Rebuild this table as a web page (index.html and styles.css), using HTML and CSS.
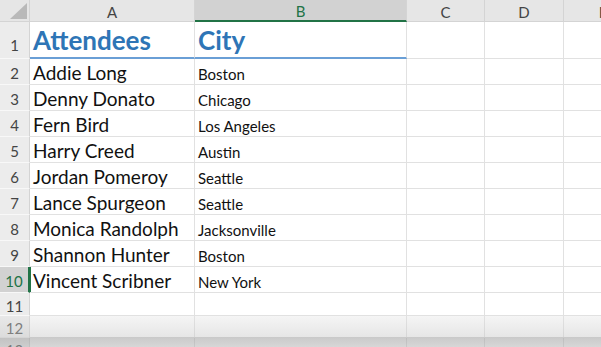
FILE: index.html
```html
<!DOCTYPE html>
<html>
<head>
<meta charset="utf-8">
<link rel="stylesheet" href="styles.css">
</head>
<body>
<div class="sheet">
  <div class="grid">
    <div class="corner"><svg width="29" height="22" viewBox="0 0 29 22"><polygon points="10,19 27,19 27,3" fill="#b9b9b9"/></svg></div>
    <div class="colhead">A</div>
    <div class="colhead sel">B</div>
    <div class="colhead">C</div>
    <div class="colhead">D</div>
    <div class="colhead edge">E</div>

    <div class="rowhead r1">1</div>
    <div class="cell title">Attendees</div>
    <div class="cell title">City</div>
    <div class="cell"></div><div class="cell"></div><div class="cell"></div>

    <div class="rowhead">2</div><div class="cell name">Addie Long</div><div class="cell city">Boston</div><div class="cell"></div><div class="cell"></div><div class="cell"></div>
    <div class="rowhead">3</div><div class="cell name">Denny Donato</div><div class="cell city">Chicago</div><div class="cell"></div><div class="cell"></div><div class="cell"></div>
    <div class="rowhead">4</div><div class="cell name">Fern Bird</div><div class="cell city">Los Angeles</div><div class="cell"></div><div class="cell"></div><div class="cell"></div>
    <div class="rowhead">5</div><div class="cell name">Harry Creed</div><div class="cell city">Austin</div><div class="cell"></div><div class="cell"></div><div class="cell"></div>
    <div class="rowhead">6</div><div class="cell name">Jordan Pomeroy</div><div class="cell city">Seattle</div><div class="cell"></div><div class="cell"></div><div class="cell"></div>
    <div class="rowhead">7</div><div class="cell name">Lance Spurgeon</div><div class="cell city">Seattle</div><div class="cell"></div><div class="cell"></div><div class="cell"></div>
    <div class="rowhead">8</div><div class="cell name">Monica Randolph</div><div class="cell city">Jacksonville</div><div class="cell"></div><div class="cell"></div><div class="cell"></div>
    <div class="rowhead">9</div><div class="cell name">Shannon Hunter</div><div class="cell city">Boston</div><div class="cell"></div><div class="cell"></div><div class="cell"></div>
    <div class="rowhead sel">10</div><div class="cell name active">Vincent Scribner</div><div class="cell city">New York</div><div class="cell"></div><div class="cell"></div><div class="cell"></div>
    <div class="rowhead">11</div><div class="cell"></div><div class="cell"></div><div class="cell"></div><div class="cell"></div><div class="cell"></div>
    <div class="rowhead">12</div><div class="cell"></div><div class="cell"></div><div class="cell"></div><div class="cell"></div><div class="cell"></div>
    <div class="rowhead">13</div><div class="cell"></div><div class="cell"></div><div class="cell"></div><div class="cell"></div><div class="cell"></div>
  </div>
  <div class="shade"></div>
</div>
</body>
</html>
```

FILE: styles.css
```css
* { box-sizing: border-box; }
html, body { margin: 0; padding: 0; background: #ffffff; overflow: hidden; }
body { width: 601px; height: 347px; }
.sheet { position: relative; width: 601px; height: 347px; overflow: hidden; }
.grid {
  display: grid;
  grid-template-columns: 30px 165px 212px 78px 79px 79px;
  grid-template-rows: 22px 37px repeat(9, 26px) 23px 22px 22px;
  font-family: Lato, "Open Sans", sans-serif;
}
.corner {
  background: #e6e6e6;
  border-right: 1px solid #d4d4d4;
  border-bottom: 1px solid #d4d4d4;
  display: flex;
}
.colhead {
  background: #e6e6e6;
  border-right: 1px solid #d4d4d4;
  border-bottom: 1px solid #d4d4d4;
  color: #444;
  font-size: 15px;
  display: flex;
  align-items: center;
  justify-content: center;
  padding-top: 2px;
}
.colhead.sel {
  background: #d2d2d2;
  color: #217346;
  border-bottom: 2px solid #217346;
}
.rowhead {
  background: #ececec;
  border-right: 1px solid #d4d4d4;
  border-bottom: 1px solid #f8f8f8;
  color: #444;
  font-size: 15px;
  display: flex;
  align-items: center;
  justify-content: center;
  padding-top: 3px;
}
.rowhead.r1 { padding-top: 10px; }
.rowhead.sel {
  background: #d2d2d2;
  color: #217346;
  border-right: 2px solid #217346;
}
.cell {
  border-right: 1px solid #e1e1e1;
  border-bottom: 1px solid #e1e1e1;
  display: flex;
  align-items: flex-end;
  white-space: nowrap;
  overflow: visible;
  color: #111;
}
.cell.title {
  font-size: 26px;
  font-weight: 700;
  color: #2e75b6;
  padding-left: 3px;
  padding-bottom: 1px;
  border-bottom: 2px solid #6a9fd6;
}
.cell.name {
  font-size: 19px;
  padding-left: 3px;
  padding-bottom: 0;
}
.cell.city {
  font-size: 15px;
  padding-left: 3px;
  padding-bottom: 1px;
}
.cell.active { box-shadow: inset 1px 0 0 #217346; }
.shade {
  position: absolute;
  left: 0;
  right: 0;
  top: 316px;
  bottom: 0;
  background: linear-gradient(to bottom, rgba(225,225,225,0.35) 0px, rgba(200,200,200,0.45) 21px, rgba(160,160,160,0.55) 22px, rgba(175,175,175,0.5) 31px);
}
```
